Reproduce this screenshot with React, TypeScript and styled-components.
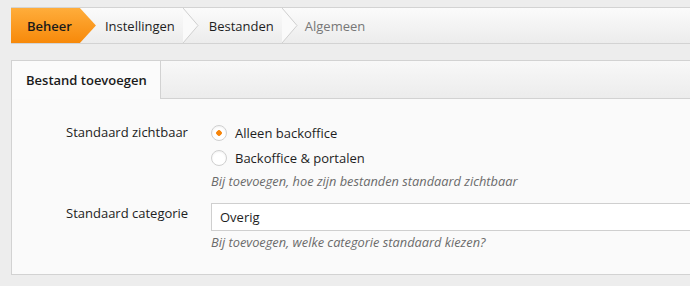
import React from 'react'
import styled, { createGlobalStyle } from 'styled-components'

const GlobalStyle = createGlobalStyle`
  html, body {
    margin: 0;
    padding: 0;
    background: #ededed;
    font-family: 'Open Sans', 'Noto Sans', sans-serif;
    color: #222;
    overflow: hidden;
  }
`

const Page = styled.div`
  width: 720px;
  padding: 7px 0 0 11px;
  display: flex;
  flex-direction: column;
  gap: 16px;
`

const Crumbs = styled.nav`
  display: flex;
  align-items: stretch;
  height: 35px;
  border-top: 1px solid #d3d3d3;
  border-bottom: 1px solid #d3d3d3;
  background: linear-gradient(#fbfbfb, #ececec);
`

const ActiveCrumb = styled.div`
  display: flex;
  align-items: center;
  height: 35px;
  padding: 0 24px 0 16px;
  font-size: 13px;
  font-weight: 600;
  color: #1a1a1a;
  background: linear-gradient(#ffad3b, #f7890a);
  clip-path: polygon(0 0, calc(100% - 16px) 0, 100% 50%, calc(100% - 16px) 100%, 0 100%);
`

const Crumb = styled.div<{ muted?: boolean }>`
  display: flex;
  align-items: center;
  font-size: 13px;
  color: ${({ muted }) => (muted ? '#777' : '#1e1e1e')};
  padding-left: ${({ muted }) => (muted ? '6px' : '9px')};
`

const CrumbText = styled.span`
  padding-right: 8px;
`

function Chevron() {
  return (
    <svg width="17" height="35" viewBox="0 0 17 35">
      <polygon points="0,0 15,17.5 0,35" fill="#fafafa" />
      <polyline points="0,0 15,17.5 0,35" fill="none" stroke="#cfcfcf" strokeWidth="1" />
    </svg>
  )
}

const Panel = styled.section`
  border: 1px solid #d2d2d2;
  border-right: none;
  background: #fafafa;
  height: 213px;
  display: flex;
  flex-direction: column;
`

const TabBar = styled.div`
  display: flex;
  height: 38px;
`

const Tab = styled.div`
  width: 134px;
  padding-left: 14px;
  display: flex;
  align-items: center;
  font-size: 13px;
  font-weight: 600;
  color: #1a1a1a;
  background: #fbfbfb;
`

const TabFill = styled.div`
  flex: 1;
  border-left: 1px solid #d2d2d2;
  border-bottom: 1px solid #d2d2d2;
  background: linear-gradient(#f8f8f8, #ececec);
`

const Form = styled.div`
  display: flex;
  flex-direction: column;
  gap: 12px;
  padding: 21px 0 0 54px;
`

const Row = styled.div`
  display: grid;
  grid-template-columns: 145px 1fr;
  align-items: start;
`

const Label = styled.div<{ offset: number }>`
  font-size: 13px;
  color: #222;
  padding-top: ${({ offset }) => offset}px;
`

const Field = styled.div`
  display: flex;
  flex-direction: column;
`

const RadioLine = styled.label`
  display: flex;
  align-items: center;
  gap: 8px;
  height: 25px;
  font-size: 13px;
  color: #1e1e1e;
`

const RadioDot = styled.span<{ checked?: boolean }>`
  width: 14px;
  height: 14px;
  border-radius: 50%;
  border: 1px solid #cfcfcf;
  background: radial-gradient(circle, ${({ checked }) => (checked ? '#f7850a 0 2.5px, #fff 3px' : '#fff 0')}), #fff;
  box-shadow: inset 0 1px 2px rgba(0, 0, 0, 0.06);
`

const Help = styled.div`
  font-size: 12.8px;
  line-height: 17px;
  font-style: italic;
  color: #6b6b6b;
  margin-top: 3px;
`

const Input = styled.div`
  height: 26px;
  border: 1px solid #cfcfcf;
  border-right: none;
  background: #fff;
  display: flex;
  align-items: center;
  padding-left: 8px;
  font-size: 13px;
  color: #1e1e1e;
  margin-top: 1px;
`

export default function App() {
  return (
    <>
      <GlobalStyle />
      <Page>
        <Crumbs>
          <ActiveCrumb>Beheer</ActiveCrumb>
          <Crumb>
            <CrumbText>Instellingen</CrumbText>
            <Chevron />
          </Crumb>
          <Crumb>
            <CrumbText>Bestanden</CrumbText>
            <Chevron />
          </Crumb>
          <Crumb muted>
            <CrumbText>Algemeen</CrumbText>
          </Crumb>
        </Crumbs>

        <Panel>
          <TabBar>
            <Tab>Bestand toevoegen</Tab>
            <TabFill />
          </TabBar>
          <Form>
            <Row>
              <Label offset={3}>Standaard zichtbaar</Label>
              <Field>
                <RadioLine>
                  <RadioDot checked />
                  Alleen backoffice
                </RadioLine>
                <RadioLine>
                  <RadioDot />
                  Backoffice &amp; portalen
                </RadioLine>
                <Help>Bij toevoegen, hoe zijn bestanden standaard zichtbaar</Help>
              </Field>
            </Row>
            <Row>
              <Label offset={2}>Standaard categorie</Label>
              <Field>
                <Input>Overig</Input>
                <Help>Bij toevoegen, welke categorie standaard kiezen?</Help>
              </Field>
            </Row>
          </Form>
        </Panel>
      </Page>
    </>
  )
}
